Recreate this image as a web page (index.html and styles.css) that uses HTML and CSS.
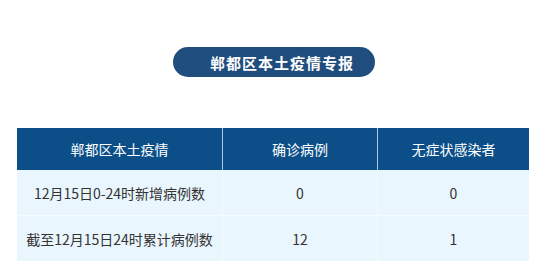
FILE: index.html
```html
<!DOCTYPE html>
<html lang="zh-CN">
<head>
<meta charset="utf-8">
<link rel="stylesheet" href="styles.css">
</head>
<body>
<div class="page">
  <div class="title-wrap"><div class="pill">郸都区本土疫情专报</div></div>
  <table class="stats">
    <thead>
      <tr><th class="c1">郸都区本土疫情</th><th class="c2">确诊病例</th><th class="c3">无症状感染者</th></tr>
    </thead>
    <tbody>
      <tr><td>12月15日0-24时新增病例数</td><td>0</td><td>0</td></tr>
      <tr><td>截至12月15日24时累计病例数</td><td>12</td><td>1</td></tr>
    </tbody>
  </table>
</div>
</body>
</html>
```
FILE: styles.css
```css
html, body { margin: 0; padding: 0; background: #fff; }
body { font-family: "Noto Sans CJK SC", "Noto Sans", sans-serif; width: 550px; height: 276px; overflow: hidden; }
.page { padding: 47px 21px 0 17px; }
.title-wrap { display: flex; padding-left: 156px; }
.pill {
  width: 202px; height: 30px; box-sizing: border-box;
  background: #1f4d7d; color: #fff; border-radius: 15px;
  font-size: 15px; font-weight: bold; letter-spacing: 1px;
  display: flex; align-items: center; justify-content: center;
  padding-left: 16px; line-height: 1;
}
.stats {
  margin-top: 51px; width: 512px; border-collapse: collapse; table-layout: fixed;
}
.stats th {
  background: #0c4f88; color: #fff; font-weight: normal; font-size: 14px;
  height: 42px; padding: 0; text-align: center;
  border-right: 1px solid #a9c8e2;
}
.stats th:last-child { border-right: none; }
.c1 { width: 205px; }
.c2 { width: 154px; }
.stats td {
  background: #eaf6fd; color: #333; font-size: 14px; height: 45px; padding: 0;
  text-align: center; border-right: 1px solid #f6fbfe; border-top: 1px solid #f6fbfe;
}
.stats td:last-child { border-right: none; }
.stats tbody tr:first-child td { border-top: none; }
```
